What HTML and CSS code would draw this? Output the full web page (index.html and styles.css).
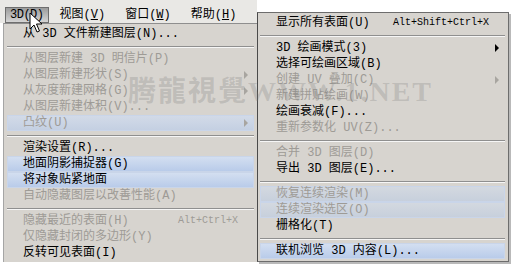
FILE: index.html
```html
<!DOCTYPE html>
<html lang="zh-CN">
<head>
  <meta charset="UTF-8" />
  <title>3D 菜单</title>
  <link rel="stylesheet" href="styles.css">
</head>
<body>
  <div class="screen">
    <div class="left">
      <div class="menubar">
        <span class="top active">3D(<u>D</u>)</span>
        <span class="top">视图(<u>V</u>)</span>
        <span class="top">窗口(<u>W</u>)</span>
        <span class="top">帮助(<u>H</u>)</span>
      </div>
      <div class="menu menu-left">
        <div class="item">从 3D 文件新建图层(N)...</div>
        <div class="sep"></div>
        <div class="item off">从图层新建 3D 明信片(P)</div>
        <div class="item off sub">从图层新建形状(S)</div>
        <div class="item off sub">从灰度新建网格(G)</div>
        <div class="item off">从图层新建体积(V)...</div>
        <div class="item off sub hi soft">凸纹(U)</div>
        <div class="sep"></div>
        <div class="item">渲染设置(R)...</div>
        <div class="item hi">地面阴影捕捉器(G)</div>
        <div class="item hi">将对象贴紧地面</div>
        <div class="item off">自动隐藏图层以改善性能(A)</div>
        <div class="sep"></div>
        <div class="item off">隐藏最近的表面(H)<span class="key">Alt+Ctrl+X</span></div>
        <div class="item off">仅隐藏封闭的多边形(Y)</div>
        <div class="item">反转可见表面(I)</div>
      </div>
    </div>

    <div class="menu menu-right">
      <div class="item">显示所有表面(U)<span class="key">Alt+Shift+Ctrl+X</span></div>
      <div class="sep"></div>
      <div class="item sub">3D 绘画模式(3)</div>
      <div class="item">选择可绘画区域(B)</div>
      <div class="item off sub">创建 UV 叠加(C)</div>
      <div class="item off">新建拼贴绘画(W)</div>
      <div class="item">绘画衰减(F)...</div>
      <div class="item off">重新参数化 UV(Z)...</div>
      <div class="sep"></div>
      <div class="item off">合并 3D 图层(D)</div>
      <div class="item">导出 3D 图层(E)...</div>
      <div class="sep"></div>
      <div class="item off hi pale">恢复连续渲染(M)</div>
      <div class="item off hi pale">连续渲染选区(O)</div>
      <div class="item">栅格化(T)</div>
      <div class="sep"></div>
      <div class="item hi">联机浏览 3D 内容(L)...</div>
    </div>

    <!-- 水印 -->
    <div class="mark">腾龍視覺WWW.1.NET</div>

    <svg class="cursor" width="14" height="22" viewBox="0 0 14 22">
      <path d="M1 1 L1 17 L5 13 L8 20 L10.5 19 L7.5 12 L13 12 Z" fill="#fff" stroke="#000" stroke-width="1"/>
    </svg>
  </div>
</body>
</html>
```

FILE: styles.css
```css
body {
  margin: 0;
  background: #fff;
  font-family: "Liberation Mono", "Noto Sans CJK SC", monospace;
  font-size: 12px;
  color: #000;
}

.screen {
  position: relative;
  display: flex;
  align-items: flex-start;
  width: 517px;
  height: 267px;
  overflow: hidden;
}

.left {
  width: 257px;
  flex-shrink: 0;
}

.menubar {
  height: 23px;
  background: #e9e8e5;
  display: flex;
  align-items: flex-end;
  padding-left: 5px;
  box-sizing: border-box;
}

.top {
  height: 16px;
  line-height: 15px;
  padding: 0 4px;
  margin-right: 10px;
  box-sizing: border-box;
  border: 1px solid transparent;
}

.top u {
  text-decoration: underline;
}

.top.active {
  background: linear-gradient(#9c9c9c, #d4d4d4);
  border-color: #6e6e6e;
  margin-right: 6px;
  letter-spacing: -0.5px;
}

.menu {
  background: #d7d4cf;
  box-sizing: border-box;
}

.menu-left {
  margin-left: 3px;
  height: 239px;
  border-left: 1px solid #a5a5a5;
  border-top: 1px solid #8e8e8e;
  padding: 2px 3px 0 3px;
}

.menu-right {
  width: 252px;
  height: 250px;
  margin-top: 12px;
  border: 1px solid #6d6d6d;
  border-left-color: #4a4a4a;
  box-shadow: 2px 2px 0 #b9b9b9;
  padding: 2px 3px 0 2px;
}

.item {
  height: 16px;
  line-height: 16px;
  padding: 0 6px 0 16px;
  display: flex;
  align-items: center;
  white-space: nowrap;
}

.off {
  color: #9e9b96;
}

.key {
  margin-left: auto;
  margin-right: 10px;
  font-size: 10px;
}

.sub::after {
  content: "";
  margin-left: auto;
  width: 0;
  height: 0;
  border-top: 4px solid transparent;
  border-bottom: 4px solid transparent;
  border-left: 4px solid #000;
}

.off.sub::after {
  border-left-color: #a8a5a0;
}

.hi {
  background: linear-gradient(#d5e0f1, #b7cae9);
  box-shadow: inset 0 0 0 1px #c9d5e9;
}

.hi.soft {
  background: linear-gradient(#d3dbe8, #c3cfe2);
}

.hi.pale {
  background: linear-gradient(#d4d9e0, #c6cfdc);
}

.sep {
  margin: 4px 0 3px;
  border-top: 1px solid #8f8f8f;
  border-bottom: 1px solid #f6f6f6;
}

.mark {
  position: absolute;
  left: 128px;
  top: 77px;
  font-family: "Liberation Serif", "Noto Sans CJK SC", serif;
  font-size: 28px;
  font-weight: bold;
  letter-spacing: 2px;
  line-height: 30px;
  color: rgba(120, 120, 120, 0.26);
  pointer-events: none;
}

.cursor {
  position: absolute;
  left: 29px;
  top: 12px;
}
```
